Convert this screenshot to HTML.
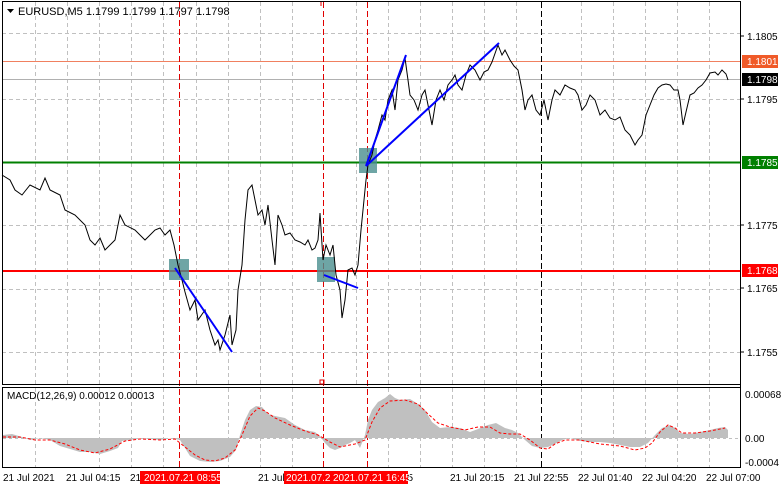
<!DOCTYPE html>
<html><head><style>
html,body{margin:0;padding:0;background:#fff;}
svg{display:block;font-family:"Liberation Sans",Tahoma,sans-serif;}
</style></head><body>
<svg width="781" height="489" viewBox="0 0 781 489" xmlns="http://www.w3.org/2000/svg">
<rect width="781" height="489" fill="#fff"/>
<!-- grid verticals -->
<g stroke="#c0c0c0" stroke-dasharray="4,3" stroke-width="1">
<line x1="35.5" y1="2" x2="35.5" y2="384"/><line x1="67.5" y1="2" x2="67.5" y2="384"/><line x1="99.5" y1="2" x2="99.5" y2="384"/><line x1="131.5" y1="2" x2="131.5" y2="384"/><line x1="163.5" y1="2" x2="163.5" y2="384"/><line x1="196.5" y1="2" x2="196.5" y2="384"/><line x1="228.5" y1="2" x2="228.5" y2="384"/><line x1="260.5" y1="2" x2="260.5" y2="384"/><line x1="292.5" y1="2" x2="292.5" y2="384"/><line x1="356.5" y1="2" x2="356.5" y2="384"/><line x1="388.5" y1="2" x2="388.5" y2="384"/><line x1="420.5" y1="2" x2="420.5" y2="384"/><line x1="452.5" y1="2" x2="452.5" y2="384"/><line x1="484.5" y1="2" x2="484.5" y2="384"/><line x1="516.5" y1="2" x2="516.5" y2="384"/><line x1="581.5" y1="2" x2="581.5" y2="384"/><line x1="613.5" y1="2" x2="613.5" y2="384"/><line x1="645.5" y1="2" x2="645.5" y2="384"/><line x1="677.5" y1="2" x2="677.5" y2="384"/><line x1="709.5" y1="2" x2="709.5" y2="384"/>
<line x1="2" y1="33.5" x2="740" y2="33.5"/><line x1="2" y1="99.5" x2="740" y2="99.5"/><line x1="2" y1="225.5" x2="740" y2="225.5"/><line x1="2" y1="289.5" x2="740" y2="289.5"/><line x1="2" y1="352.5" x2="740" y2="352.5"/>
</g>
<g stroke="#c0c0c0" stroke-dasharray="4,3" stroke-width="1">
<line x1="35.5" y1="388" x2="35.5" y2="467"/><line x1="99.5" y1="388" x2="99.5" y2="467"/><line x1="131.5" y1="388" x2="131.5" y2="467"/><line x1="163.5" y1="388" x2="163.5" y2="467"/><line x1="228.5" y1="388" x2="228.5" y2="467"/><line x1="260.5" y1="388" x2="260.5" y2="467"/><line x1="292.5" y1="388" x2="292.5" y2="467"/><line x1="388.5" y1="388" x2="388.5" y2="467"/><line x1="420.5" y1="388" x2="420.5" y2="467"/><line x1="452.5" y1="388" x2="452.5" y2="467"/><line x1="484.5" y1="388" x2="484.5" y2="467"/><line x1="516.5" y1="388" x2="516.5" y2="467"/><line x1="581.5" y1="388" x2="581.5" y2="467"/><line x1="613.5" y1="388" x2="613.5" y2="467"/><line x1="645.5" y1="388" x2="645.5" y2="467"/><line x1="677.5" y1="388" x2="677.5" y2="467"/><line x1="709.5" y1="388" x2="709.5" y2="467"/>
</g>
<!-- horizontal level lines -->
<line x1="2" y1="61.5" x2="740" y2="61.5" stroke="#f08060" stroke-width="1"/>
<line x1="2" y1="79.5" x2="740" y2="79.5" stroke="#b0b0b0" stroke-width="1"/>
<line x1="2" y1="162.5" x2="740" y2="162.5" stroke="#008000" stroke-width="2"/>
<line x1="2" y1="271" x2="740" y2="271" stroke="#ff0000" stroke-width="2"/>
<!-- special verticals -->
<g stroke-dasharray="6,3" stroke-width="1">
<line x1="179.5" y1="2" x2="179.5" y2="467" stroke="#e00000"/>
<line x1="323.5" y1="2" x2="323.5" y2="467" stroke="#e00000"/>
<line x1="367.5" y1="2" x2="367.5" y2="467" stroke="#e00000"/>
<line x1="541.5" y1="2" x2="541.5" y2="467" stroke="#000"/>
</g>
<!-- teal boxes -->
<g fill="#4a8f8f" fill-opacity="0.8">
<rect x="169" y="259" width="20" height="21"/>
<rect x="317" y="257" width="18" height="25"/>
<rect x="359" y="148" width="18" height="25"/>
</g>
<!-- price -->
<polyline fill="none" stroke="#000" stroke-width="1" points="2,175 10,180 15,190 22,195 30,185 40,190 45,178 50,190 60,195 65,210 75,215 85,225 90,240 95,245 100,238 105,250 115,240 120,215 125,225 135,230 145,240 155,230 160,228 165,235 170,230 174,245 178,265 182,280 185,292 190,310 195,300 198,320 205,310 210,330 215,345 218,340 220,350 225,335 230,315 232,345 236,330 238,290 242,265 245,220 248,190 252,185 255,200 258,215 262,210 265,225 268,205 272,240 275,265 278,215 282,225 285,235 290,233 295,240 300,242 305,245 308,240 312,250 315,248 318,240 320,213 323,260 326,245 330,255 333,245 336,275 340,290 342,318 345,300 348,270 352,268 355,275 358,265 361,230 363,210 366,180 368,165 372,155 375,140 378,130 382,115 385,120 388,100 392,90 395,110 398,80 402,70 405,58 408,80 410,95 414,100 418,110 422,95 425,90 428,105 432,125 436,100 440,90 444,100 448,85 452,80 455,75 458,85 462,90 466,75 470,65 475,70 480,80 484,72 488,70 492,62 498,45 502,55 505,50 510,60 514,66 518,70 522,90 525,110 528,100 532,95 536,110 540,115 544,100 548,120 552,100 555,90 560,95 565,85 570,88 575,90 578,95 582,110 586,105 590,95 595,100 600,115 605,110 610,118 615,120 620,117 625,130 630,135 635,145 638,140 642,135 646,115 650,105 654,95 658,88 662,85 666,84 670,85 674,90 678,90 680,100 683,125 686,112 690,95 694,93 698,88 702,85 706,80 710,73 715,72 718,75 722,70 726,74 728,80"/>
<!-- blue lines -->
<g stroke="#0000ff" stroke-width="2" fill="none">
<line x1="175" y1="268" x2="232" y2="352"/>
<line x1="324" y1="275" x2="358" y2="288"/>
<line x1="366" y1="166" x2="406" y2="55"/>
<line x1="366" y1="166" x2="499" y2="43"/>
</g>
<!-- frames -->
<rect x="2.5" y="1.5" width="738" height="383" fill="none" stroke="#000"/>
<line x1="740.5" y1="385" x2="740.5" y2="388" stroke="#000"/>
<rect x="2.5" y="387.5" width="738" height="80" fill="none" stroke="#000"/>
<line x1="321" y1="2" x2="321" y2="6" stroke="#e00000"/>
<rect x="320" y="380" width="4" height="4" fill="none" stroke="#e00000"/>
<!-- header -->
<polygon points="7,9 14,9 10.5,13" fill="#000"/>
<text x="18" y="15" font-size="11" fill="#000">EURUSD,M5  1.1799 1.1799 1.1797 1.1798</text>
<!-- price axis -->
<g font-size="10" fill="#000">
<line x1="740" y1="36" x2="744" y2="36" stroke="#000"/><text x="747" y="40">1.1805</text>
<line x1="740" y1="99" x2="744" y2="99" stroke="#000"/><text x="747" y="103">1.1795</text>
<line x1="740" y1="225" x2="744" y2="225" stroke="#000"/><text x="747" y="229">1.1775</text>
<line x1="740" y1="288" x2="744" y2="288" stroke="#000"/><text x="747" y="292">1.1765</text>
<line x1="740" y1="352" x2="744" y2="352" stroke="#000"/><text x="747" y="356">1.1755</text>
</g>
<rect x="742" y="55" width="36" height="13" fill="#f05a28"/><text x="747" y="65" font-size="10" fill="#fff">1.1801</text>
<rect x="742" y="73" width="36" height="13" fill="#000"/><text x="747" y="83" font-size="10" fill="#fff">1.1798</text>
<rect x="742" y="156" width="36" height="13" fill="#008000"/><text x="747" y="166" font-size="10" fill="#fff">1.1785</text>
<rect x="742" y="264" width="36" height="13" fill="#ff0000"/><text x="747" y="274" font-size="10" fill="#fff">1.1768</text>
<!-- MACD -->
<line x1="3" y1="438.5" x2="740" y2="438.5" stroke="#c0c0c0" stroke-dasharray="3,3"/>
<path fill="#c0c0c0" d="M3,438 L3,435 L12,434 L22,437 L30,440 L40,438 L50,440 L60,446 L70,449 L80,452 L90,452 L100,454 L110,451 L118,448 L122,441 L130,440 L140,438 L150,439 L160,440 L170,438 L180,440 L185,448 L190,456 L200,461 L210,462 L220,461 L230,457 L236,450 L240,435 L245,420 L250,410 L256,406 L262,407 L268,414 L275,416 L285,418 L295,425 L305,430 L315,432 L320,436 L325,443 L330,448 L335,450 L340,448 L345,445 L350,443 L355,440 L360,448 L365,435 L368,420 L372,410 L378,402 L385,398 L390,394 L395,398 L400,400 L410,399 L418,404 L425,410 L432,422 L440,428 L450,427 L460,428 L470,432 L478,429 L488,425 L496,423 L505,428 L512,430 L518,433 L525,440 L532,446 L540,448 L548,447 L555,444 L562,440 L570,438 L580,441 L590,442 L600,442 L610,443 L620,445 L630,447 L640,447 L648,443 L655,435 L662,428 L670,425 L675,428 L680,433 L690,434 L700,432 L710,430 L718,428 L725,427 L728,430 L728,438 Z"/>
<polyline fill="none" stroke="#ff0000" stroke-width="1" stroke-dasharray="3,2" points="3,437 20,437 35,440 50,440 65,444 80,450 95,453 110,449 125,441 140,439 160,440 175,439 185,447 195,455 205,460 215,461 225,458 235,450 242,435 250,416 258,408 265,411 275,418 290,425 305,431 318,435 330,442 340,447 355,444 365,440 372,422 380,408 390,401 405,400 418,404 428,414 438,423 450,427 465,430 478,427 490,427 500,433 510,434 520,434 530,440 540,448 548,449 555,444 565,440 580,440 600,444 620,446 635,450 645,448 652,443 660,432 668,425 675,428 682,433 695,433 710,431 725,428"/>
<text x="7" y="399" font-size="10" fill="#000">MACD(12,26,9) 0.00012 0.00013</text>
<g font-size="10" fill="#000">
<text x="745" y="398">0.00068</text>
<text x="745" y="442">0.00</text>
<text x="745" y="466">-0.0004</text>
</g>
<!-- time axis -->
<g font-size="10" fill="#000">
<text x="3" y="481">21 Jul 2021</text>
<text x="66" y="481">21 Jul 04:15</text>
<text x="130" y="481">21</text>
<text x="194" y="481">09:35</text>
<text x="258" y="481">21 Jul</text>
<text x="388" y="481">17:35</text>
<text x="450" y="481">21 Jul 20:15</text>
<text x="514" y="481">21 Jul 22:55</text>
<text x="578" y="481">22 Jul 01:40</text>
<text x="642" y="481">22 Jul 04:20</text>
<text x="706" y="481">22 Jul 07:00</text>
</g>
<rect x="140" y="471" width="80" height="13" fill="#ff0000"/>
<text x="144" y="481" font-size="10" fill="#fff">2021.07.21 08:55</text>
<rect x="284" y="471" width="79" height="13" fill="#ff0000"/>
<text x="286" y="481" font-size="10" fill="#fff">2021.07.2</text>
<rect x="330" y="471" width="78" height="13" fill="#ff0000"/>
<text x="333" y="481" font-size="10" fill="#fff">2021.07.21 16:45</text>
</svg>
</body></html>
